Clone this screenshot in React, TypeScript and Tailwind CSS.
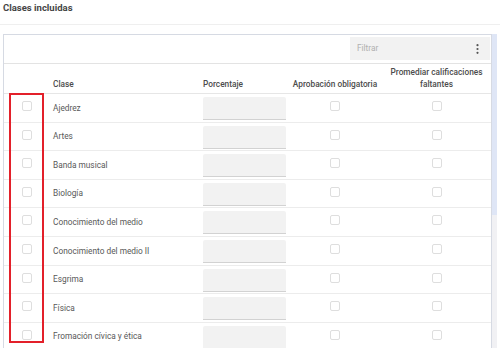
const clases = [
  "Ajedrez",
  "Artes",
  "Banda musical",
  "Biología",
  "Conocimiento del medio",
  "Conocimiento del medio II",
  "Esgrima",
  "Física",
  "Fromación cívica y ética",
];

function Check() {
  return <div className="h-[10px] w-[10px] rounded-[2px] border-[1.5px] border-[#dedede] bg-white" />;
}

export default function App() {
  return (
    <div className="relative h-[348px] w-[500px] overflow-hidden bg-white font-['Roboto','Liberation_Sans',sans-serif]">
      {/* Title */}
      <div className="h-[25px] border-b border-[#efefef] px-[3px] pt-[2px] text-[9.5px] font-bold leading-[12px] text-[#454545]">
        Clases incluidas
      </div>

      <div className="flex pl-[3px] pt-[9px]">
        <div className="w-[489px] border border-b-0 border-[#d6dae3]">
          {/* Toolbar */}
          <div className="flex h-[29px] justify-end border-b border-[#e3e3e3] pt-[2px] pr-[1px]">
            <div className="flex h-[23px] w-[140px] items-center justify-between bg-[#f2f2f2] pl-[7px] pr-[11px]">
              <span className="text-[8.3px] text-[#b0b0b0]">Filtrar</span>
              <svg width="3" height="10" viewBox="0 0 3 10" className="text-[#555]">
                <circle cx="1.5" cy="1.2" r="1.1" fill="currentColor" />
                <circle cx="1.5" cy="5" r="1.1" fill="currentColor" />
                <circle cx="1.5" cy="8.8" r="1.1" fill="currentColor" />
              </svg>
            </div>
          </div>

          {/* Header */}
          <div className="grid h-[30px] grid-cols-[49px_150px_85px_94px_1fr] items-end border-b border-[#e6e6e6] pb-[3px] text-[8.3px] font-medium leading-[12px] text-[#4c4c4c]">
            <div />
            <div>Clase</div>
            <div>Porcentaje</div>
            <div className="text-center">Aprobación obligatoria</div>
            <div className="text-center">
              Promediar calificaciones
              <br />
              faltantes
            </div>
          </div>

          {/* Rows */}
          {clases.map((c) => (
            <div
              key={c}
              className="grid h-[28.6px] grid-cols-[49px_150px_85px_94px_1fr] border-b border-[#ececec] text-[8.3px] text-[#585858]"
            >
              <div className="pl-[18px] pt-[7px]">
                <Check />
              </div>
              <div className="flex items-center">{c}</div>
              <div className="pt-[3px]">
                <div className="h-[23px] w-[83px] rounded-t-[2px] border-b border-[#d2d2d2] bg-[#f2f2f2]" />
              </div>
              <div className="flex justify-center pt-[7px]">
                <Check />
              </div>
              <div className="flex justify-center pt-[7px]">
                <Check />
              </div>
            </div>
          ))}
        </div>

        {/* Scrollbar */}
        <div className="flex w-[5px] flex-col">
          <div className="h-[181px] bg-[#dfe6f6]" />
          <div className="flex-1 bg-[#f1f1f4]" />
        </div>
      </div>

      {/* Highlight annotation */}
      <div className="absolute left-[9px] top-[93px] h-[250px] w-[35px] border-2 border-[#e3202a]" />
    </div>
  );
}
